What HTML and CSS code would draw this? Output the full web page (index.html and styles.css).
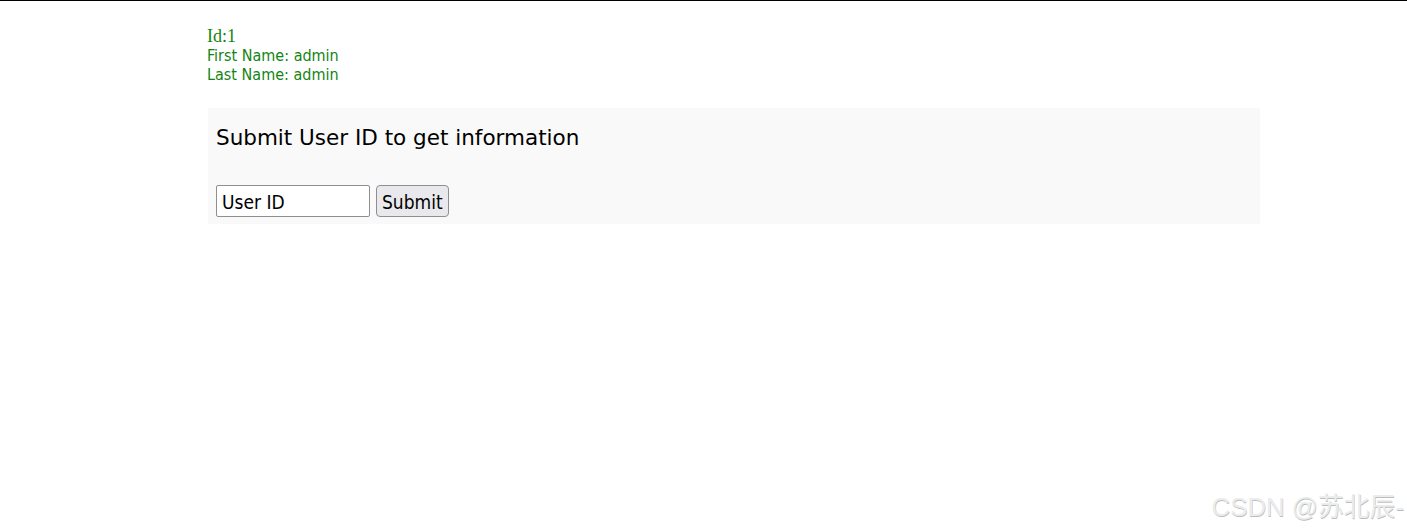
FILE: index.html
```html
<!DOCTYPE html>
<html>
<head>
<meta charset="utf-8">
<link rel="stylesheet" href="styles.css">
</head>
<body>
<div class="topline"></div>
<div class="page">
  <div class="result">
    <div class="serif">Id:1</div>
    <div>First Name: admin</div>
    <div>Last Name: admin</div>
  </div>
  <div class="vulnerable">
    <h3 class="title">Submit User ID to get information</h3>
    <form class="form">
      <input class="field" type="text" value="User ID">
      <button class="btn" type="button">Submit</button>
    </form>
  </div>
</div>
<div class="watermark">CSDN @苏北辰-</div>
</body>
</html>
```
FILE: styles.css
```css
html, body {
  margin: 0;
  padding: 0;
  background: #fff;
  height: 100%;
}
body {
  position: relative;
  font-family: "DejaVu Sans Condensed", "DejaVu Sans", sans-serif;
  overflow: hidden;
}
.topline {
  height: 1px;
  background: #000;
}
.page {
  padding: 26px 147px 0 207px;
}
.result {
  color: #138413;
  font-size: 16px;
  line-height: 19px;
}
.serif {
  font-family: "Liberation Serif", serif;
  font-size: 18px;
}
.vulnerable {
  margin-top: 24px;
  margin-left: 1px;
  background: #f9f9f9;
  padding: 14px 8px 7px 8px;
}
.title {
  margin: 0;
  font-family: "DejaVu Sans", sans-serif;
  font-weight: normal;
  font-size: 21.5px;
  line-height: 31px;
  color: #000;
}
.form {
  display: flex;
  gap: 6px;
  margin-top: 32px;
}
.field {
  box-sizing: border-box;
  width: 154px;
  height: 32px;
  border: 1px solid #8f8f8f;
  border-radius: 2px;
  padding: 3px 5px 1px;
  font-family: inherit;
  font-size: 19px;
  color: #000;
  background: #fff;
  margin: 0;
}
.btn {
  box-sizing: border-box;
  height: 32px;
  padding: 2px 5px 0;
  border: 1px solid #8f8f8f;
  border-radius: 4px;
  background: #e9e9ed;
  font-family: inherit;
  font-size: 19px;
  color: #000;
  margin: 0;
}
.watermark {
  position: absolute;
  right: 3px;
  bottom: 8px;
  font-family: "Liberation Sans", "Noto Sans CJK SC", sans-serif;
  font-size: 25.8px;
  color: #ececec;
  text-shadow: 0.5px 0.5px 0.5px #bdbdbd;
}
```
